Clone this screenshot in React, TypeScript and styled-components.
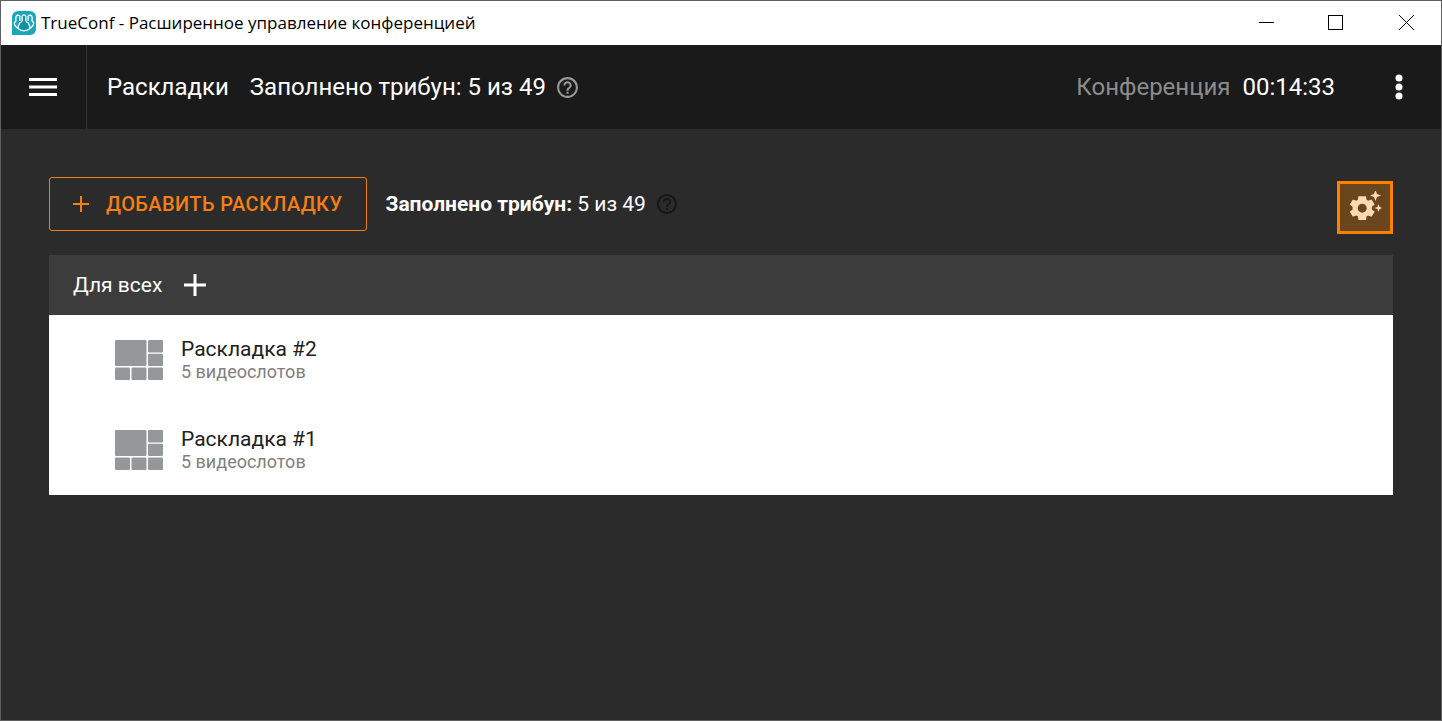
import React from "react";
import styled, { createGlobalStyle } from "styled-components";

const GlobalStyle = createGlobalStyle`
  *, *::before, *::after { box-sizing: border-box; }
  body { margin: 0; background: #2b2b2b; font-family: Roboto, "Liberation Sans", sans-serif; }
  button { font: inherit; color: inherit; background: none; border: 0; padding: 0; cursor: pointer; }
  h1, h2, p, ul { margin: 0; padding: 0; font: inherit; list-style: none; }
  svg { display: block; flex: none; }
`;

const Window = styled.div`
  display: flex;
  flex-direction: column;
  min-height: 100vh;
  border: 1px solid #5f5f5f;
  background: #2b2b2b;
`;

const TitleBar = styled.div`
  display: flex;
  align-items: center;
  height: 44px;
  padding-left: 11px;
  background: #fff;
  color: #000;
`;

const WindowTitle = styled.span`
  flex: 1;
  margin-left: 5px;
  font: 17px/24px "Open Sans", "Noto Sans", sans-serif;
  white-space: nowrap;
`;

const WindowButton = styled.button`
  display: flex;
  align-items: center;
  justify-content: center;
  width: 70px;
  height: 44px;
`;

const Header = styled.header`
  display: flex;
  align-items: center;
  height: 84px;
  background: #1a1a1a;
  color: #fff;
  font-size: 24px;
  line-height: 32px;
  white-space: nowrap;
`;

const MenuButton = styled.button`
  display: flex;
  align-items: center;
  width: 86px;
  height: 84px;
  padding-left: 28px;
  border-right: 1px solid #333;
`;

const HeaderTitle = styled.h1`
  margin-left: 20px;
`;

const HeaderStatus = styled.p`
  margin: 0 9px 0 21px;
`;

const HelpButton = styled.button<{ $color: string }>`
  color: ${(p) => p.$color};
`;

const Meeting = styled.p`
  margin-left: auto;
  color: #8c8c8c;
`;

const Timer = styled.time`
  margin-left: 12px;
  color: #fff;
`;

const MoreButton = styled.button`
  display: flex;
  align-items: center;
  justify-content: center;
  width: 84px;
  height: 84px;
  margin-left: 22px;
`;

const Content = styled.main`
  padding: 48px;
`;

const Toolbar = styled.div`
  display: flex;
  align-items: flex-start;
  justify-content: space-between;
  min-height: 57px;
  margin-bottom: 21px;
`;

const ToolbarGroup = styled.div`
  display: flex;
  align-items: center;
`;

const AddLayoutButton = styled.button`
  display: flex;
  align-items: center;
  gap: 16px;
  height: 54px;
  padding: 0 24px 0 22px;
  margin-right: 18px;
  border: 1px solid #f57f17;
  border-radius: 3px;
  color: #f57f17;
  font-size: 20px;
  font-weight: 500;
  letter-spacing: 0.02em;
  text-transform: uppercase;
  white-space: nowrap;
`;

const SlotStatus = styled.p`
  margin-right: 9px;
  color: #fff;
  font-size: 21px;
  line-height: 28px;
  white-space: nowrap;
`;

const AutoButton = styled.button`
  display: flex;
  align-items: center;
  justify-content: center;
  align-self: flex-end;
  width: 56px;
  height: 53px;
  border: 3px solid #ff8000;
  background: #6b451c;
  color: #ffd9b3;
`;

const Panel = styled.section`
  background: #fff;
`;

const PanelHeader = styled.div`
  display: flex;
  align-items: center;
  gap: 21px;
  height: 60px;
  padding: 0 24px;
  background: #3c3c3c;
  color: #fff;
  font-size: 21px;
  line-height: 28px;
`;

const LayoutRow = styled.li`
  display: flex;
  align-items: center;
  gap: 18px;
  height: 90px;
  padding: 0 66px;
`;

const LayoutName = styled.h2`
  color: #212121;
  font-size: 21px;
  line-height: 24px;
`;

const LayoutInfo = styled.p`
  color: #808080;
  font-size: 18px;
  line-height: 22px;
`;

const Logo = () => (
  <svg width="24" height="24" viewBox="0 0 24 24" aria-hidden="true">
    <path d="M6 0h12a6 6 0 0 1 6 6v12a6 6 0 0 1-6 6H0V6a6 6 0 0 1 6-6z" fill="#1ba6b9" />
    <g fill="#1ba6b9" stroke="#fff" strokeWidth="1.300" strokeLinejoin="round">
      <path d="M6.500 17.500C4 16 2.300 14.200 2.300 12c0-1.200 1.600-1.300 1.700-2.300C3.700 8 3.500 6.500 4.300 5.200 5.200 3.700 7.200 3.800 7.800 5.500c.4 1.500 0 3-.1 4.500" />
      <path d="M17.500 17.500c2.500-1.500 4.200-3.300 4.200-5.500 0-1.200-1.600-1.300-1.700-2.300.3-1.700.5-3.200-.3-4.500-.9-1.500-2.900-1.400-3.500.3-.4 1.500 0 3 .1 4.500" />
      <path
        fill="#1490a4"
        d="M12 19.800c-2.500 0-4.500-.8-6-2.200.3-3.300 1-5.800 3.300-6.800 1.200-.6 1.100-1.500.9-2.700C9.800 5.600 10.200 3.800 12 3.800s2.200 1.800 1.800 4.300c-.2 1.200-.3 2.100.9 2.700 2.300 1 3 3.500 3.300 6.800-1.500 1.400-3.500 2.200-6 2.200z"
      />
    </g>
  </svg>
);

const HelpIcon = ({ size = 24 }: { size?: number }) => (
  <svg width={size} height={size} viewBox="0 0 24 24" fill="currentColor" aria-hidden="true">
    <path d="M11 18h2v-2h-2v2zm1-16C6.480 2 2 6.480 2 12s4.480 10 10 10 10-4.480 10-10S17.520 2 12 2zm0 18c-4.410 0-8-3.590-8-8s3.590-8 8-8 8 3.590 8 8-3.590 8-8 8zm0-14c-2.210 0-4 1.790-4 4h2c0-1.100.9-2 2-2s2 .9 2 2c0 2-3 1.750-3 5h2c0-2.250 3-2.500 3-5 0-2.210-1.790-4-4-4z" />
  </svg>
);

const GearIcon = () => (
  <svg width="36" height="34" viewBox="0 0 36 34" fill="currentColor" aria-hidden="true">
    <path
      fillRule="evenodd"
      d="M11.800 4h8.400l.5 4 1.800 1 3.600-1.500 3.400 5.600-3 2.400v2.900l3 2.400-3.400 5.600-3.600-1.500-1.800 1-.5 4.100h-8.400l-.5-4.100-1.800-1-3.600 1.500-3.400-5.600 3-2.400v-2.900l-3-2.400 3.400-5.600L9.500 9l1.800-1zM16 12.100a4.900 4.900 0 1 0 0 9.800 4.900 4.900 0 0 0 0-9.800z"
      transform="translate(.5 1.500) scale(.92)"
    />
    <path d="M28.500-1l1.500 4 4 1.500-4 1.500-1.500 4-1.500-4-4-1.500 4-1.500z" />
    <path d="M31.500 13l1.100 2.900 2.900 1.100-2.900 1.100-1.100 2.900-1.100-2.900-2.900-1.100 2.900-1.100z" />
  </svg>
);

const LayoutIcon = () => (
  <svg width="48" height="40" viewBox="0 0 48 40" fill="#949899" aria-hidden="true">
    <rect width="31.500" height="26" rx="1.200" />
    <rect x="33" width="15" height="12.500" rx="1.200" />
    <rect x="33" y="13.700" width="15" height="12.300" rx="1.200" />
    <rect y="27.500" width="15" height="12.500" rx="1.200" />
    <rect x="16.500" y="27.500" width="15" height="12.500" rx="1.200" />
    <rect x="33" y="27.500" width="15" height="12.500" rx="1.200" />
  </svg>
);

const layouts = [
  { name: "Раскладка #2", info: "5 видеослотов" },
  { name: "Раскладка #1", info: "5 видеослотов" },
];

export default function App() {
  return (
    <>
      <GlobalStyle />
      <Window>
        <TitleBar>
          <Logo />
          <WindowTitle>TrueConf - Расширенное управление конференцией</WindowTitle>
          <WindowButton aria-label="Свернуть">
            <svg width="16" height="16" shapeRendering="crispEdges">
              <path d="M1 7.500h15" stroke="#000" />
            </svg>
          </WindowButton>
          <WindowButton aria-label="Развернуть">
            <svg width="16" height="16" shapeRendering="crispEdges">
              <rect x=".5" y=".5" width="14" height="14" fill="none" stroke="#000" />
            </svg>
          </WindowButton>
          <WindowButton aria-label="Закрыть">
            <svg width="16" height="16">
              <path d="M1 0l15 15M16 0l-15 15" stroke="#000" />
            </svg>
          </WindowButton>
        </TitleBar>
        <Header>
          <MenuButton aria-label="Меню">
            <svg width="28" height="18" fill="#fff">
              <path d="M0 0h28v3H0zM0 7.500h28v3H0zM0 15h28v3H0z" />
            </svg>
          </MenuButton>
          <HeaderTitle>Раскладки</HeaderTitle>
          <HeaderStatus>Заполнено трибун: 5 из 49</HeaderStatus>
          <HelpButton $color="#9a9a9a" aria-label="Справка">
            <HelpIcon size={25} />
          </HelpButton>
          <Meeting>
            Конференция<Timer>00:14:33</Timer>
          </Meeting>
          <MoreButton aria-label="Ещё">
            <svg width="8" height="26" fill="#fff">
              <circle cx="4" cy="4" r="3.500" />
              <circle cx="4" cy="13" r="3.500" />
              <circle cx="4" cy="22" r="3.500" />
            </svg>
          </MoreButton>
        </Header>
        <Content>
          <Toolbar>
            <ToolbarGroup>
              <AddLayoutButton>
                <svg width="18" height="18" aria-hidden="true">
                  <path d="M1 9h16M9 1v16" stroke="currentColor" strokeWidth="2" />
                </svg>
                Добавить раскладку
              </AddLayoutButton>
              <SlotStatus>
                <b>Заполнено трибун:</b> 5 из 49
              </SlotStatus>
              <HelpButton $color="#161616" aria-label="Справка">
                <HelpIcon />
              </HelpButton>
            </ToolbarGroup>
            <AutoButton aria-label="Автоматическая настройка">
              <GearIcon />
            </AutoButton>
          </Toolbar>
          <Panel>
            <PanelHeader>
              <h2>Для всех</h2>
              <button aria-label="Добавить раскладку для всех">
                <svg width="24" height="24">
                  <path d="M1 12h22M12 1v22" stroke="#fff" strokeWidth="3" />
                </svg>
              </button>
            </PanelHeader>
            <ul>
              {layouts.map((layout) => (
                <LayoutRow key={layout.name}>
                  <LayoutIcon />
                  <div>
                    <LayoutName>{layout.name}</LayoutName>
                    <LayoutInfo>{layout.info}</LayoutInfo>
                  </div>
                </LayoutRow>
              ))}
            </ul>
          </Panel>
        </Content>
      </Window>
    </>
  );
}
